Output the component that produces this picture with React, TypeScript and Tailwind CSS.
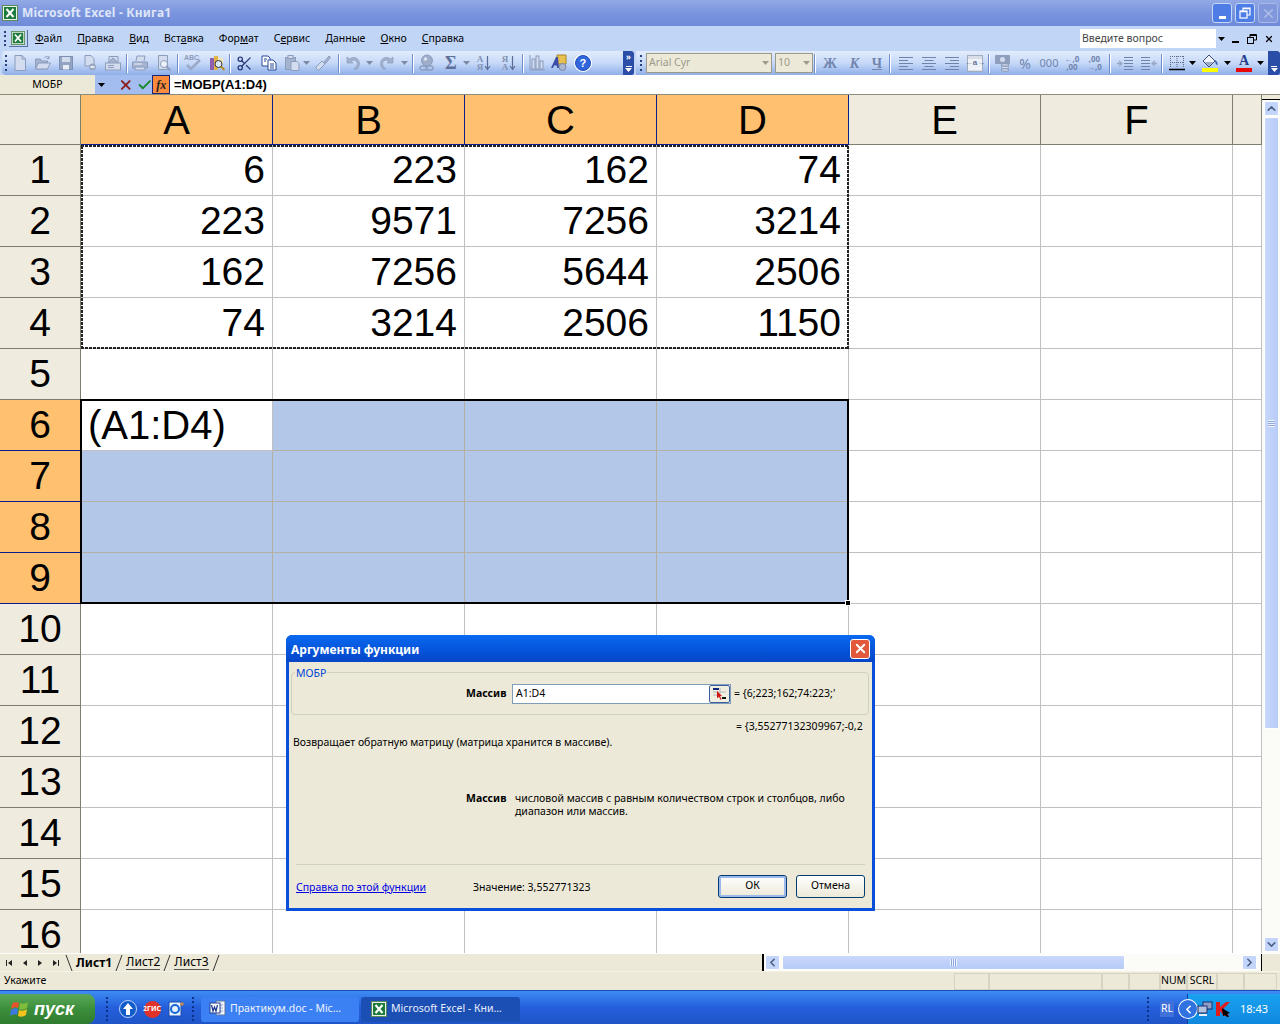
import type { ReactNode } from 'react'
import { Scissors, X, Check, ChevronUp, ChevronDown, ChevronLeft, ChevronRight } from 'lucide-react'

const COLS = ['A', 'B', 'C', 'D', 'E', 'F', '']
const COL_W = [192, 192, 192, 192, 192, 192, 29]
const DATA: Record<number, string[]> = {
  1: ['6', '223', '162', '74'],
  2: ['223', '9571', '7256', '3214'],
  3: ['162', '7256', '5644', '2506'],
  4: ['74', '3214', '2506', '1150'],
}
const UI = "font-['Noto_Sans',sans-serif]"
const LINE = '#8c9cbc'
const PALE = '#d3dcee'
const MID = '#a5b3cf'

function Caret({ color = '#000' }: { color?: string }) {
  return (
    <svg width="7" height="4" viewBox="0 0 7 4" className="shrink-0">
      <path d="M0 0h7L3.5 4z" fill={color} />
    </svg>
  )
}

function ExcelLogo({ size = 16 }: { size?: number }) {
  return (
    <svg width={size} height={size} viewBox="0 0 16 16" className="shrink-0">
      <rect x="0.5" y="0.5" width="15" height="15" fill="#e9f3e4" stroke="#5b8a5b" />
      <rect x="2" y="2" width="12" height="12" fill="#1f7a3d" />
      <path d="M4.5 4l7 8M11.5 4l-7 8" stroke="#fff" strokeWidth="2" />
    </svg>
  )
}

function Svg({ children, w = 18, h = 18 }: { children: ReactNode; w?: number; h?: number }) {
  return (
    <svg width={w} height={h} viewBox={`0 0 ${w} ${h}`} className="shrink-0" fill="none">
      {children}
    </svg>
  )
}

function NewDoc() {
  return <Svg><path d="M4 1.5h7l3.5 3.5v11.5H4z" fill={PALE} stroke={LINE} /><path d="M11 1.5V5h3.5" stroke={LINE} /></Svg>
}
function OpenFolder() {
  return <Svg><path d="M1.5 15V5h5l1 2h6v8z" fill={MID} stroke={LINE} /><path d="M1.5 15l3-6h12l-3 6z" fill={PALE} stroke={LINE} /><path d="M10 4c2-2 4-2 5 0M15 2v2.5h-2.500" stroke={LINE} /></Svg>
}
function Floppy() {
  return <Svg><rect x="2.500" y="2.500" width="13" height="13" fill="#93a3c2" stroke="#8090b2" /><rect x="5" y="3" width="8" height="5" fill={PALE} /><rect x="6" y="11" width="6" height="4.500" fill="#e6ebf6" /></Svg>
}
function DocLock() {
  return <Svg><path d="M4 1.500h6l3 3V12H4z" fill={PALE} stroke={LINE} /><circle cx="11.500" cy="13" r="3.500" fill="#97a6c3" /><path d="M9.500 13h4" stroke="#fff" strokeWidth="1.500" /></Svg>
}
function MailDoc() {
  return <Svg><path d="M5 8V2.500h9V8" fill={PALE} stroke={LINE} /><path d="M3.500 9l5.500-5 5.500 5" fill={MID} stroke={LINE} /><rect x="1.500" y="9" width="15" height="7" fill={PALE} stroke={LINE} /><path d="M4 11.500h6M4 13.500h6" stroke={LINE} /></Svg>
}
function PrinterIcon() {
  return <Svg><path d="M5 7l1-5h8l-1 5" fill={PALE} stroke={LINE} /><path d="M1.500 8h15v6h-15z" fill={MID} stroke={LINE} /><path d="M4 13h10v3H4z" fill={PALE} stroke={LINE} /><path d="M3 10h8" stroke="#eef2fa" /></Svg>
}
function Preview() {
  return <Svg><path d="M3.500 1.500h9v14h-9z" fill={PALE} stroke={LINE} /><circle cx="9" cy="10" r="3.500" fill="#eef2fa" stroke={LINE} /><path d="M11.500 12.500l4 4" stroke={LINE} strokeWidth="2" /></Svg>
}
function Spell() {
  return (
    <div className="relative h-[18px] w-[18px]">
      <span className="absolute -top-[1px] left-0 font-['Liberation_Sans',sans-serif] text-[7px] font-bold text-[#8c9cbc]">ABC</span>
      <svg width="18" height="18" viewBox="0 0 18 18" fill="none" className="absolute top-0 left-0"><path d="M3 11l4 4 9-9" stroke="#9aa9c6" strokeWidth="2.500" /></svg>
    </div>
  )
}
function Research() {
  return <Svg><rect x="2" y="4" width="4" height="12" fill="#8d5fb0" /><rect x="6" y="2" width="4" height="14" fill="#e2b54a" /><rect x="10" y="4" width="5" height="6" fill="#f2e6b8" /><circle cx="10.500" cy="10" r="3.500" fill="#dbe8fa" stroke="#333" /><path d="M13 12.500l3.500 3.500" stroke="#b98a1e" strokeWidth="2" /></Svg>
}
function CopyIcon() {
  return <Svg><path d="M2 2h6l2 2v8H2z" fill="#fff" stroke="#27489a" /><path d="M8 6h5l3 3v7H8z" fill="#fff" stroke="#27489a" /><path d="M4 5h3M4 7h2M10 10h4M10 12h4M10 14h4" stroke="#27489a" /></Svg>
}
function Paste() {
  return <Svg><rect x="2.500" y="3.500" width="10" height="12" fill={MID} stroke={LINE} /><rect x="5" y="1.500" width="5" height="3" fill={PALE} stroke={LINE} /><path d="M8 7.500h6l2 2v7H8z" fill={PALE} stroke={LINE} /></Svg>
}
function Brush() {
  return <Svg><path d="M2 13l6-6 3 3-6 6c-1 .6-2.500-.5-3-3z" fill={PALE} stroke={LINE} /><path d="M10 8l5-6 1.500 1.500-5 6z" fill={MID} stroke={LINE} /></Svg>
}
function UndoIcon({ flip }: { flip?: boolean }) {
  return (
    <Svg>
      <g transform={flip ? 'translate(18 0) scale(-1 1)' : undefined}>
        <path d="M3 3v6h6L7 7c2-1.500 5-1 6 1 1 2 0 5-3 7h3c3-3 3-7 1-9.500C12 3 8 3 5.500 5z" fill="#a3b1cd" stroke={LINE} strokeWidth="0.700" />
      </g>
    </Svg>
  )
}
function LinkGlobe() {
  return <Svg><circle cx="9" cy="6.500" r="5.500" fill="#9eadca" stroke={LINE} /><circle cx="7.500" cy="5" r="1.800" fill="#dbe3f2" /><rect x="2" y="12" width="7" height="4" rx="2" stroke={LINE} strokeWidth="1.300" /><rect x="8" y="12" width="7" height="4" rx="2" stroke={LINE} strokeWidth="1.300" /></Svg>
}
function SortIcon({ top, bottom }: { top: string; bottom: string }) {
  return (
    <div className="flex items-center gap-[1px]">
      <span className="text-center font-['Liberation_Serif',serif] text-[9px] leading-[8px] font-bold text-[#8392b2]">{top}<br />{bottom}</span>
      <svg width="7" height="16" viewBox="0 0 7 16"><path d="M3.500 1v13M1 11l2.500 3.500L6 11" fill="none" stroke="#5c6d96" strokeWidth="1.200" /></svg>
    </div>
  )
}
function Bars() {
  return <Svg><path d="M2 1v15h15" stroke={LINE} /><rect x="4" y="5" width="3" height="10" fill={PALE} stroke={LINE} /><rect x="8" y="2" width="3" height="13" fill={PALE} stroke={LINE} /><rect x="12" y="7" width="3" height="8" fill={PALE} stroke={LINE} /></Svg>
}
function Drawing() {
  return <Svg><path d="M7 1h9v9H7z" fill="#e8c14f" stroke="#a8862a" /><path d="M1 14L6 3h2l1 11H7l-.3-2.500H4L3 14z" fill="#3c4ea8" /><circle cx="12.500" cy="13" r="3.500" fill="#a9b6cf" stroke="#7a88a6" /></Svg>
}
function Help() {
  return (
    <span className="flex h-[16px] w-[16px] items-center justify-center rounded-full border border-[#1f4fc0] bg-[#2f66dc] font-['Liberation_Sans',sans-serif] text-[11px] font-bold text-white ring-1 ring-white">?</span>
  )
}

function Lines({ kind }: { kind: 'l' | 'c' | 'r' }) {
  const x = (w: number) => (kind === 'l' ? 2 : kind === 'r' ? 16 - w : (18 - w) / 2)
  const rows: [number, number][] = [[3, 14], [6, 9], [9, 14], [12, 9], [15, 14]]
  return <Svg>{rows.map(([y, w]) => <path key={y} d={`M${x(w)} ${y + 0.5}h${w}`} stroke="#6f83ab" />)}</Svg>
}
function Merge() {
  return (
    <div className="flex h-[17px] w-[16px] items-center justify-center border border-[#a3adc0] bg-[linear-gradient(#d9dde8_0_3px,#eef1f7_3px_14px,#d9dde8_14px)] font-['Liberation_Sans',sans-serif] text-[8px] font-bold text-[#64739a]">←a→</div>
  )
}
function Currency() {
  return <Svg><rect x="1" y="1" width="15" height="9" rx="1" fill="#8f9ebd" /><circle cx="8.500" cy="5.500" r="2.500" fill={PALE} /><ellipse cx="11" cy="11" rx="4" ry="1.300" fill={PALE} stroke={LINE} /><ellipse cx="11" cy="13.500" rx="4" ry="1.300" fill={PALE} stroke={LINE} /><ellipse cx="11" cy="16" rx="4" ry="1.300" fill={PALE} stroke={LINE} /></Svg>
}
function IndentIcon({ flip }: { flip?: boolean }) {
  return (
    <Svg>
      <g transform={flip ? 'translate(18 0) scale(-1 1)' : undefined}>
        <path d="M8 3.500h9M8 6.500h9M8 9.500h9M8 12.500h9M8 15.500h9" stroke="#6f83ab" />
        <path d="M1 9.500h4M3 7l3 2.500L3 12" stroke="#98a6c4" strokeWidth="1.300" />
      </g>
    </Svg>
  )
}
function Borders() {
  return <Svg><path d="M2.500 2v12M9 2v12M15.500 2v12M2 2.500h14M2 8.500h14" stroke="#5b6680" strokeDasharray="1 1" /><path d="M1 15.500h16" stroke="#000" strokeWidth="1.500" /></Svg>
}
function Bucket() {
  return <Svg w={20} h={14}><path d="M3 7l6-6 6 6-6 6z" fill="#eef2fa" stroke="#3a4a74" /><path d="M5 8h8l-4 4.500z" fill="#9aa9c6" /><path d="M15 6c2 1 3 3 2.500 5-1.500 0-2.500-2-2.500-5z" fill="#3a5bb0" /></Svg>
}

function Tb({ w = 24, children }: { w?: number; children?: ReactNode }) {
  return (
    <div className="flex h-full shrink-0 items-center justify-center" style={{ width: w }}>
      {children}
    </div>
  )
}

function Sep() {
  return <div className="mx-[1px] h-[19px] w-[2px] shrink-0 border-r border-r-white bg-[#6f8fc6]" />
}

function Grip() {
  return (
    <div className="flex h-[16px] w-[3px] shrink-0 flex-col justify-between">
      {[0, 1, 2, 3].map(i => (
        <span key={i} className="h-[2px] w-[2px] bg-[#27417c]" />
      ))}
    </div>
  )
}

function EndHandle({ w, arrows }: { w: number; arrows?: boolean }) {
  return (
    <div style={{ width: w }} className="flex h-full shrink-0 flex-col items-center justify-between rounded-r-[3px] bg-[#2a4da8] py-[2px]">
      {arrows ? <span className="text-[8px] leading-[8px] font-bold text-white">»</span> : <span />}
      <div className="flex flex-col items-center gap-[1px] pb-[1px]">
        <span className="h-[1px] w-[6px] bg-white" />
        <Caret color="#fff" />
      </div>
    </div>
  )
}

function TitleBar() {
  return (
    <div className="flex h-[26px] items-center bg-gradient-to-b from-[#93a9e6] via-[#7a95de] to-[#6f8bd9] pr-[2px] pl-[2px]">
      <ExcelLogo />
      <span className={`${UI} ml-[4px] text-[12px] font-bold tracking-[0.2px] text-[#dfe6f8]`}>Microsoft Excel - Книга1</span>
      <div className="ml-auto flex gap-[3px]">
        <div className="flex h-[20px] w-[20px] items-end justify-center rounded-[3px] border border-[#c8d6f5] bg-[#4f7de6] pb-[3px]">
          <span className="h-[3px] w-[7px] bg-white" />
        </div>
        <div className="flex h-[20px] w-[20px] items-center justify-center rounded-[3px] border border-[#c8d6f5] bg-[#4f7de6]">
          <svg width="12" height="12" viewBox="0 0 12 12" fill="none" stroke="#fff" strokeWidth="1.2">
            <rect x="1" y="4" width="7" height="7" />
            <path d="M4 4V1h7v7H8M1 4.600h7M4 1.600h7" />
          </svg>
        </div>
        <div className="flex h-[20px] w-[20px] items-center justify-center rounded-[3px] border border-[#a9b8e4] bg-[#8197db]">
          <X size={15} color="#aebce8" strokeWidth={2.5} />
        </div>
      </div>
    </div>
  )
}

function MenuBar() {
  return (
    <div className={`${UI} flex h-[25px] items-center bg-[#c1d6f7] text-[10.5px] text-black`}>
      <div className="ml-[4px]"><Grip /></div>
      <div className="ml-[2px] mr-[7px] flex h-[17px] w-[19px] items-center justify-center border-r border-b border-[#5a6f9a]">
        <ExcelLogo size={14} />
      </div>
      <div className="flex gap-[15px]">
        <span><u>Ф</u>айл</span>
        <span><u>П</u>равка</span>
        <span><u>В</u>ид</span>
        <span>Вст<u>а</u>вка</span>
        <span>Фор<u>м</u>ат</span>
        <span>С<u>е</u>рвис</span>
        <span><u>Д</u>анные</span>
        <span><u>О</u>кно</span>
        <span><u>С</u>правка</span>
      </div>
      <div className="ml-auto flex items-center">
        <div className="flex h-[19px] w-[147px] items-center bg-white pl-[2px] text-[#444]">
          <span>Введите вопрос</span>
          <div className="ml-auto flex h-full w-[11px] items-center justify-center bg-[#c1d6f7]"><Caret /></div>
        </div>
        <div className="mr-[6px] ml-[5px] flex w-[42px] items-center justify-between">
          <span className="mt-[6px] h-[2px] w-[7px] bg-black" />
          <svg width="10" height="10" viewBox="0 0 10 10" fill="none" stroke="#000">
            <rect x="0.5" y="3.5" width="6" height="6" />
            <path d="M3 3V.5h6.500V6H7M3 1.500h6.500" />
          </svg>
          <X size={10} color="#000" strokeWidth={3} />
        </div>
      </div>
    </div>
  )
}

function ToolBars() {
  const bar = 'bg-gradient-to-b from-[#e2ecfd] via-[#c6d9f8] to-[#8fafe8]'
  return (
    <div className={`${UI} flex h-[24px] bg-[#c1d6f7]`}>
      <div className={`ml-[2px] flex h-full w-[632px] items-center rounded-l-[4px] ${bar} pl-[3px]`}>
        <Grip />
        <div className="flex h-full items-center">
          <Tb w={23.4}><NewDoc /></Tb>
          <Tb w={23.4}><OpenFolder /></Tb>
          <Tb w={23.4}><Floppy /></Tb>
          <Tb w={23.4}><DocLock /></Tb>
          <Tb w={23.4}><MailDoc /></Tb>
          <Sep />
          <Tb w={23}><PrinterIcon /></Tb>
          <Tb w={24}><Preview /></Tb>
          <Sep />
          <Tb w={26}><Spell /></Tb>
          <Tb w={22}><Research /></Tb>
          <Sep />
          <Tb w={26}><Scissors size={17} color="#26387a" strokeWidth={1.8} /></Tb>
          <Tb w={22}><CopyIcon /></Tb>
          <Tb w={24}><Paste /></Tb>
          <Tb w={6}><Caret color="#7f8ba6" /></Tb>
          <Tb w={27}><Brush /></Tb>
          <Sep />
          <Tb w={24}><UndoIcon /></Tb>
          <Tb w={10}><Caret color="#7f8ba6" /></Tb>
          <Tb w={24}><UndoIcon flip /></Tb>
          <Tb w={12}><Caret color="#7f8ba6" /></Tb>
          <Sep />
          <Tb w={24}><LinkGlobe /></Tb>
          <Tb w={24}><span className="font-['Liberation_Serif',serif] text-[18px] leading-[18px] font-bold text-[#5d6f9b]">Σ</span></Tb>
          <Tb w={8}><Caret color="#7f8ba6" /></Tb>
          <Tb w={26}><SortIcon top="А" bottom="Я" /></Tb>
          <Tb w={24}><SortIcon top="Я" bottom="А" /></Tb>
          <Sep />
          <Tb w={24}><Bars /></Tb>
          <Tb w={20}><Drawing /></Tb>
          <Tb w={28}><Help /></Tb>
        </div>
        <div className="ml-auto h-full"><EndHandle w={11} arrows /></div>
      </div>
      <div className={`ml-[2px] flex h-full flex-1 items-center ${bar} pl-[4px]`}>
        <Grip />
        <div className="ml-[3px] flex h-[20px] w-[126px] shrink-0 items-center justify-between border border-[#9c9a8a] bg-[#ece9d8] px-[2px] text-[10.5px] text-[#9d9b8c]">
          <span>Arial Cyr</span>
          <Caret color="#9d9b8c" />
        </div>
        <div className="ml-[3px] flex h-[20px] w-[38px] shrink-0 items-center justify-between border border-[#9c9a8a] bg-[#ece9d8] px-[2px] text-[10.5px] text-[#9d9b8c]">
          <span>10</span>
          <Caret color="#9d9b8c" />
        </div>
        <Sep />
        <Tb w={26}><span className="font-['Liberation_Serif',serif] text-[14px] font-bold text-[#7185ad]">Ж</span></Tb>
        <Tb w={23}><span className="font-['Liberation_Serif',serif] text-[14px] font-bold text-[#7185ad] italic">К</span></Tb>
        <Tb w={22}><span className="font-['Liberation_Serif',serif] text-[14px] font-bold text-[#7185ad] underline">Ч</span></Tb>
        <Sep />
        <div className="w-[2px] shrink-0" />
        <Tb w={23}><Lines kind="l" /></Tb>
        <Tb w={23}><Lines kind="c" /></Tb>
        <Tb w={23}><Lines kind="r" /></Tb>
        <Tb w={24}><Merge /></Tb>
        <Sep />
        <Tb w={24}><Currency /></Tb>
        <Tb w={20}><span className="text-[14px] text-[#7185ad]">%</span></Tb>
        <Tb w={28}><span className="text-[11px] text-[#7185ad]">000</span></Tb>
        <Tb w={18}><span className="text-center text-[8px] leading-[8px] font-bold text-[#7185ad]">←,0<br />,00</span></Tb>
        <Tb w={27}><span className="text-center text-[8px] leading-[8px] font-bold text-[#7185ad]">,00<br />→,0</span></Tb>
        <Sep />
        <Tb w={25}><IndentIcon /></Tb>
        <Tb w={23}><IndentIcon flip /></Tb>
        <Sep />
        <Tb w={26}><Borders /></Tb>
        <Tb w={5}><Caret /></Tb>
        <div className="flex h-full w-[30px] shrink-0 flex-col items-center justify-center">
          <Bucket />
          <span className="h-[4px] w-[16px] bg-[#ffff00]" />
        </div>
        <Tb w={4}><Caret /></Tb>
        <div className="flex h-full w-[30px] shrink-0 flex-col items-center justify-center">
          <span className="font-['Liberation_Serif',serif] text-[14px] leading-[14px] font-bold text-[#1f3c8f]">A</span>
          <span className="h-[4px] w-[16px] bg-[#e70808]" />
        </div>
        <Tb w={3}><Caret /></Tb>
        <div className="ml-auto h-full"><EndHandle w={12} /></div>
      </div>
    </div>
  )
}

function FormulaBar() {
  return (
    <div className="flex h-[19px] items-center bg-white">
      <div className={`${UI} flex h-full w-[95px] items-center justify-center bg-[#ece9d8] text-[10.5px] text-black`}>МОБР</div>
      <div className="flex h-full w-[75px] items-center bg-[#a3bdf0]">
        <div className="ml-[3px] w-[18px]"><Caret /></div>
        <X size={16} color="#8e1d1d" strokeWidth={3} className="ml-[3px]" />
        <Check size={16} color="#1c8a2e" strokeWidth={3} className="ml-[3px]" />
        <div className="ml-[0px] flex h-[19px] w-[18px] items-center justify-center border border-[#14267c] bg-[#fb8b3c] font-['Liberation_Serif',serif] text-[12px] font-bold text-[#222] italic">fx</div>
      </div>
      <span className="ml-[4px] font-['Liberation_Sans',sans-serif] text-[13px] font-bold text-black">=МОБР(A1:D4)</span>
    </div>
  )
}

function Ants() {
  const h = 'absolute left-0 h-[2px] w-full bg-[repeating-linear-gradient(90deg,#222_0,#222_3px,transparent_3px,transparent_4px)]'
  const v = 'absolute top-0 h-full w-[2px] bg-[repeating-linear-gradient(0deg,#222_0,#222_3px,transparent_3px,transparent_4px)]'
  return (
    <div className="pointer-events-none absolute top-[50px] left-[81px] h-[204px] w-[768px]">
      <span className={`${h} top-0`} />
      <span className={`${h} bottom-0`} />
      <span className={`${v} left-0`} />
      <span className={`${v} right-0`} />
    </div>
  )
}

function Sheet() {
  return (
    <div className="flex h-[859px] border-t border-[#8e8c7c]">
      <div className="relative min-w-0 flex-1 overflow-hidden font-['Liberation_Sans',sans-serif]">
        <div className="flex h-[50px]">
          <div className="h-full w-[81px] shrink-0 border-r border-b border-[#7f7d6b] bg-[#efebde]" />
          {COLS.map((c, i) => (
            <div
              key={i}
              style={{ width: COL_W[i] }}
              className={
                i < 4
                  ? 'flex h-full shrink-0 items-center justify-center border-r border-b border-r-[#0a1f8f] border-b-[#0a1f8f] bg-[#ffc06f] text-[40px] text-black'
                  : 'flex h-full shrink-0 items-center justify-center border-r border-b border-[#7f7d6b] bg-[#efebde] text-[40px] text-black'
              }
            >
              {c}
            </div>
          ))}
        </div>
        {Array.from({ length: 16 }, (_, r) => r + 1).map(r => {
          const sel = r >= 6 && r <= 9
          return (
            <div key={r} className="flex h-[51px]">
              <div
                className={
                  sel
                    ? 'flex h-full w-[81px] shrink-0 items-center justify-center border-r border-b border-r-[#0a1f8f] border-b-[#0a1f8f] bg-[#ffc06f] text-[39px] text-black'
                    : 'flex h-full w-[81px] shrink-0 items-center justify-center border-r border-b border-[#7f7d6b] bg-[#efebde] text-[39px] text-black'
                }
              >
                {r}
              </div>
              {COLS.map((_, c) => {
                const blue = sel && c < 4 && !(r === 6 && c === 0)
                return (
                  <div
                    key={c}
                    style={{ width: COL_W[c] }}
                    className={
                      blue
                        ? 'h-full shrink-0 border-r border-b border-[#b4b0a4] bg-[#b3c7e8]'
                        : 'flex h-full shrink-0 items-center justify-end border-r border-b border-[#c0c0c0] bg-white pr-[7px] text-[39px] text-black'
                    }
                  >
                    {!blue && DATA[r]?.[c]}
                    {r === 6 && c === 0 && <span className="mr-auto ml-[7px] text-[40px]">(A1:D4)</span>}
                  </div>
                )
              })}
            </div>
          )
        })}
        <Ants />
        {/* array selection */}
        <div className="pointer-events-none absolute top-[304px] left-[80px] h-[205px] w-[769px] border-2 border-black">
          <span className="absolute -right-[4px] -bottom-[4px] h-[6px] w-[6px] border border-white bg-black" />
        </div>
      </div>
      <VScroll />
    </div>
  )
}

function ScrollBtn({ children }: { children: ReactNode }) {
  return (
    <div className="flex h-[15px] w-[15px] shrink-0 items-center justify-center rounded-[2px] border border-white bg-[#c3d5fb]">
      {children}
    </div>
  )
}

function VScroll() {
  return (
    <div className="flex w-[18px] shrink-0 flex-col items-center bg-[#fbfbf7]">
      <div className="h-[5px] w-full border-b border-black bg-[#ece9d8]" />
      <div className="mt-[1px]">
        <ScrollBtn><ChevronUp size={13} color="#4d6185" strokeWidth={3} /></ScrollBtn>
      </div>
      <div className="mt-[1px] flex h-[612px] w-[15px] items-center justify-center rounded-[2px] border border-white bg-gradient-to-r from-[#c9d8fb] to-[#b6cbf8]">
        <span className="h-[7px] w-[7px] bg-[repeating-linear-gradient(0deg,#eef3ff_0,#eef3ff_1px,#8da8e0_1px,#8da8e0_2px)]" />
      </div>
      <div className="mt-auto mb-[1px]">
        <ScrollBtn><ChevronDown size={13} color="#4d6185" strokeWidth={3} /></ScrollBtn>
      </div>
    </div>
  )
}

function Slash({ back }: { back?: boolean }) {
  return (
    <svg width="8" height="16" viewBox="0 0 8 16" className="shrink-0">
      <path d={back ? 'M1 0l6 16' : 'M7 0L1 16'} stroke="#333" fill="none" />
    </svg>
  )
}

function NavIcon({ d }: { d: string }) {
  return (
    <svg width="8" height="8" viewBox="0 0 8 8"><path d={d} fill="#222" /></svg>
  )
}

function SheetTabs() {
  return (
    <div className={`${UI} flex h-[18px] items-center border-t border-[#fff] bg-[#ece9d8] text-[12px] text-black`}>
      <div className="flex w-[65px] items-center justify-around pr-[1px] pl-[1px]">
        <NavIcon d="M1 1h1v6H1zM7 1v6L3 4z" />
        <NavIcon d="M6 1v6L2 4z" />
        <NavIcon d="M2 1v6l4-3z" />
        <NavIcon d="M1 1v6l4-3zM6 1h1v6H6z" />
      </div>
      <div className="flex items-center gap-[3px]">
        <Slash back />
        <span className="font-bold">Лист1</span>
        <Slash />
        <span className="border-b border-[#555] leading-[14px]">Лист2</span>
        <Slash />
        <span className="border-b border-[#555] leading-[14px]">Лист3</span>
        <Slash />
      </div>
      <div className="ml-auto flex h-full w-[518px] items-center border-l-2 border-l-black bg-[#fbfbf7] pl-[1px]">
        <ScrollBtn><ChevronLeft size={13} color="#4d6185" strokeWidth={3} /></ScrollBtn>
        <div className="ml-[2px] flex h-[15px] w-[343px] items-center justify-center rounded-[2px] border border-white bg-gradient-to-b from-[#c9d8fb] to-[#b6cbf8]">
          <span className="h-[7px] w-[7px] bg-[repeating-linear-gradient(90deg,#eef3ff_0,#eef3ff_1px,#8da8e0_1px,#8da8e0_2px)]" />
        </div>
        <div className="ml-auto">
          <ScrollBtn><ChevronRight size={13} color="#4d6185" strokeWidth={3} /></ScrollBtn>
        </div>
        <div className="ml-[4px] h-full w-[1px] bg-black" />
        <div className="h-full w-[18px] bg-[#ece9d8]" />
      </div>
    </div>
  )
}

function StatusBar() {
  const panels = [
    ['', 35], ['', 113], ['', 27], ['', 31], ['NUM', 27], ['SCRL', 30], ['', 27], ['', 33],
  ] as const
  return (
    <div className={`${UI} flex h-[19px] items-center justify-between border-t border-[#f5f3e8] bg-[#ece9d8] pr-[3px] pl-[4px] text-[10.5px] text-black`}>
      <span>Укажите</span>
      <div className="flex h-[17px] items-center">
        {panels.map(([t, w], i) => (
          <div key={i} style={{ width: w }} className="flex h-[17px] items-center justify-center border border-[#d6d3c2]">{t}</div>
        ))}
      </div>
    </div>
  )
}

function XpFlag() {
  return (
    <svg width="20" height="20" viewBox="0 0 20 20">
      <path d="M2 5c2-2 4-2 7-1l-1 5C6 8 4 8 1 10z" fill="#e8522a" />
      <path d="M10 4c3 1 5 1 8-1l-1 6c-3 2-5 2-8 1z" fill="#7fbe3a" />
      <path d="M1 11c3-2 5-2 7-1l-1 6c-2-1-4-1-7 1z" fill="#3d79e0" />
      <path d="M9 11c3 1 5 1 8-1l-1 6c-3 2-5 2-8 1z" fill="#f6c21c" />
    </svg>
  )
}

function WordIcon() {
  return (
    <svg width="17" height="18" viewBox="0 0 17 18" className="shrink-0">
      <path d="M7 1h9v14H7z" fill="#f2f5fc" stroke="#5c74a8" />
      <path d="M10 5h4M10 8h4M10 11h4" stroke="#8ca0c8" />
      <rect x="1" y="3" width="10" height="10" fill="#fff" stroke="#1f3c8f" />
      <path d="M2.500 5l1.500 6 1.500-4 1.500 4 1.500-6" stroke="#1f3c8f" strokeWidth="1.300" fill="none" />
    </svg>
  )
}

function TaskBtn({ active, icon, label, w }: { active?: boolean; icon: ReactNode; label: string; w: number }) {
  return (
    <div
      style={{ width: w }}
      className={
        active
          ? 'flex h-[25px] items-center gap-[4px] rounded-[3px] bg-[#1c4fb4] pl-[10px] text-[10.5px] text-[#e8eefc]'
          : 'flex h-[25px] items-center gap-[4px] rounded-[3px] bg-[#3c81f3] pl-[8px] text-[10.5px] text-[#eef3ff]'
      }
    >
      {icon}
      <span>{label}</span>
    </div>
  )
}

function TaskGrip() {
  return (
    <div className="flex h-[24px] w-[3px] shrink-0 flex-col justify-between">
      {[0, 1, 2, 3, 4, 5].map(i => (
        <span key={i} className="h-[2px] w-[2px] bg-[#0d2f86]" />
      ))}
    </div>
  )
}

function Taskbar() {
  return (
    <div className={`${UI} flex h-[34px] items-center border-t border-[#1c4dbd] bg-gradient-to-b from-[#3f8cf3] via-[#245edb] to-[#1f55c8] pt-[3px] text-white`}>
      <div className="flex h-full w-[95px] items-center rounded-r-[8px] bg-gradient-to-b from-[#5aa85a] via-[#3b8f3b] to-[#2f7a2f] pl-[10px]">
        <XpFlag />
        <span className="ml-[4px] font-['Liberation_Sans',sans-serif] text-[18px] font-bold italic">пуск</span>
      </div>
      <div className="ml-[11px]"><TaskGrip /></div>
      <div className="ml-[10px] flex w-[66px] items-center justify-between">
        <svg width="18" height="18" viewBox="0 0 18 18">
          <circle cx="9" cy="9" r="8.500" fill="#0f5bc8" stroke="#bcd6fb" />
          <path d="M9 3l5 6h-3v6H7V9H4z" fill="#fff" />
        </svg>
        <span className="flex h-[17px] w-[17px] items-center justify-center rounded-full bg-[#e0322a] text-[7px] font-bold text-white">2ГИС</span>
        <svg width="18" height="18" viewBox="0 0 18 18">
          <rect x="2" y="2" width="12" height="14" fill="#e6f0ff" stroke="#1d4fa8" />
          <circle cx="8" cy="9" r="4" fill="none" stroke="#1668d8" strokeWidth="2" />
          <path d="M13 4h4M15 2v4" stroke="#f09020" />
        </svg>
      </div>
      <div className="ml-[7px]"><TaskGrip /></div>
      <div className="ml-[6px] flex gap-[2px]">
        <TaskBtn w={158} label="Практикум.doc - Mic..." icon={<WordIcon />} />
        <TaskBtn active w={159} label="Microsoft Excel - Кни..." icon={<ExcelLogo />} />
      </div>
      <div className="ml-auto flex h-full items-center">
        <TaskGrip />
        <span className="ml-[10px] bg-[#3f71d8] px-[1px] text-[10.5px]">RL</span>
        <div className="ml-[13px] flex h-full w-[93px] items-center border-l border-[#103e9f] bg-gradient-to-b from-[#1aa1ef] to-[#0f88e0]">
          <span className="-ml-[9px] flex h-[18px] w-[18px] shrink-0 items-center justify-center rounded-full bg-[#2f72e0] ring-1 ring-white"><ChevronLeft size={13} color="#fff" strokeWidth={3} /></span>
          <svg width="16" height="16" viewBox="0 0 16 16" className="shrink-0">
            <rect x="6" y="1" width="9" height="7" fill="#8fa0c8" stroke="#1c2f6e" />
            <rect x="1" y="5" width="9" height="7" fill="#b4c2de" stroke="#1c2f6e" />
            <path d="M2 14h8" stroke="#e8eefc" strokeWidth="2" />
          </svg>
          <svg width="16" height="16" viewBox="0 0 16 16" className="ml-[2px] shrink-0">
            <path d="M1 1h4v5l6-5h4L8 8l6 7H9L5 10v5H1z" fill="#e21b1b" />
            <path d="M7 7l8 5-3 1 2 3-2 0-2-2-2 1z" fill="#000" />
          </svg>
          <span className="ml-[9px] text-[11px] text-white">18:43</span>
        </div>
      </div>
    </div>
  )
}

function XpButton({ children, def }: { children: ReactNode; def?: boolean }) {
  return (
    <div
      className={
        def
          ? 'flex h-[23px] w-[69px] items-center justify-center rounded-[3px] border border-[#003c74] bg-gradient-to-b from-white to-[#ece9d8] shadow-[inset_0_0_0_2px_#9db8ea]'
          : 'flex h-[23px] w-[69px] items-center justify-center rounded-[3px] border border-[#003c74] bg-gradient-to-b from-white to-[#ece9d8]'
      }
    >
      {children}
    </div>
  )
}

function Dialog() {
  return (
    <div className={`${UI} absolute top-[635px] left-[286px] flex h-[276px] w-[589px] flex-col rounded-t-[6px] bg-[#0a4fd8] text-[10.5px] text-black`}>
      <div className="flex h-[27px] items-center justify-between rounded-t-[6px] bg-gradient-to-b from-[#0a6af0] via-[#0556dc] to-[#0546c8] pr-[5px] pl-[5px]">
        <span className="pt-[3px] text-[12px] font-bold text-white">Аргументы функции</span>
        <div className="flex h-[20px] w-[20px] items-center justify-center rounded-[3px] border border-white bg-[#e2583a]">
          <X size={15} color="#fff" strokeWidth={3} />
        </div>
      </div>
      <div className="mx-[3px] mb-[3px] flex flex-1 flex-col bg-[#ece9d8] pl-[2px]">
        <div className="relative mt-[10px] mr-[3px] flex h-[43px] items-center rounded-[4px] border border-[#d0d0bf] pl-[174px]">
          <span className="absolute -top-[7px] left-[3px] bg-[#ece9d8] px-[1px] text-[#0046d5]">МОБР</span>
          <span className="w-[46px] font-bold">Массив</span>
          <div className="flex h-[20px] w-[219px] items-center border border-[#7f9db9] bg-white pl-[3px]">
            <span>A1:D4</span>
            <div className="ml-auto flex h-full w-[21px] items-center justify-center rounded-[2px] border border-[#3c5f9e] bg-[#f0eee0]">
              <svg width="15" height="14" viewBox="0 0 15 14">
                <path d="M1 1h6v2H1z" fill="#14267c" />
                <path d="M1 5h13M1 8h6M8 1v6" stroke="#b8b8b8" />
                <path d="M5 4l5 5-2 .3 1.500 3-1 .5-1.500-3-2 1.500z" fill="#d41010" />
                <path d="M10 10h4v2h-4z" fill="#111" />
              </svg>
            </div>
          </div>
          <span className="ml-[3px] whitespace-nowrap">= {'{'}6;223;162;74:223;'</span>
        </div>
        <div className="mt-[4px] mr-[4px] flex h-[14px] justify-end overflow-hidden">
          <span className="w-[132px] whitespace-nowrap">= {'{'}3,55277132309967;-0,2</span>
        </div>
        <p className="mt-[2px] whitespace-nowrap pl-[2px]">Возвращает обратную матрицу (матрица хранится в массиве).</p>
        <div className="mt-[41px] flex pl-[175px] leading-[13px]">
          <span className="w-[49px] shrink-0 font-bold">Массив</span>
          <p className="w-[340px]">числовой массив с равным количеством строк и столбцов, либо диапазон или массив.</p>
        </div>
        <div className="mt-[46px] mr-[7px] ml-[5px] h-[1px] shrink-0 bg-[#d0d0bf]" />
        <div className="mt-[10px] flex items-center pr-[7px] pl-[5px]">
          <span className="mt-[3px] w-[177px] text-[#0000e0] underline">Справка по этой функции</span>
          <span className="mt-[3px]">Значение: 3,552771323</span>
          <div className="ml-auto flex gap-[9px]">
            <XpButton def>ОК</XpButton>
            <XpButton>Отмена</XpButton>
          </div>
        </div>
      </div>
    </div>
  )
}

export default function App() {
  return (
    <div className="relative h-[1024px] w-[1280px] overflow-hidden bg-[#ece9d8]">
      <TitleBar />
      <MenuBar />
      <ToolBars />
      <FormulaBar />
      <Sheet />
      <SheetTabs />
      <StatusBar />
      <Taskbar />
      <Dialog />
    </div>
  )
}
